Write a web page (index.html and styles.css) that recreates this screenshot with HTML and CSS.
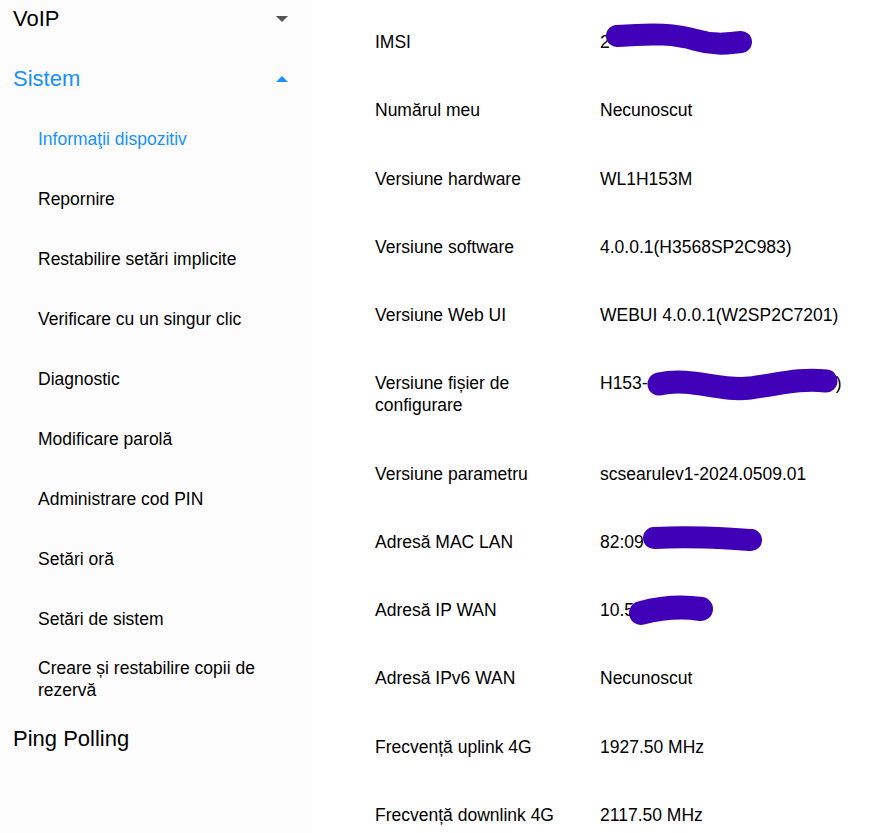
FILE: index.html
```html
<!DOCTYPE html>
<html lang="ro">
<head>
<meta charset="utf-8">
<title>Informaţii dispozitiv</title>
<link rel="stylesheet" href="styles.css">
</head>
<body>
<div class="page">
  <nav class="sidebar">
    <div class="menu">
      <div class="menu-top">
        <span>VoIP</span>
        <span class="caret caret-down"></span>
      </div>
      <div class="menu-top active">
        <span>Sistem</span>
        <span class="caret caret-up"></span>
      </div>
      <div class="menu-sub active">Informaţii dispozitiv</div>
      <div class="menu-sub">Repornire</div>
      <div class="menu-sub">Restabilire setări implicite</div>
      <div class="menu-sub">Verificare cu un singur clic</div>
      <div class="menu-sub">Diagnostic</div>
      <div class="menu-sub">Modificare parolă</div>
      <div class="menu-sub">Administrare cod PIN</div>
      <div class="menu-sub">Setări oră</div>
      <div class="menu-sub">Setări de sistem</div>
      <div class="menu-sub">Creare și restabilire copii de rezervă</div>
      <div class="menu-top">
        <span>Ping Polling</span>
      </div>
    </div>
  </nav>
  <main class="content">
    <div class="info">
      <div class="row"><div class="label">IMSI</div><div class="value">2</div></div>
      <div class="row"><div class="label">Numărul meu</div><div class="value">Necunoscut</div></div>
      <div class="row"><div class="label">Versiune hardware</div><div class="value">WL1H153M</div></div>
      <div class="row"><div class="label">Versiune software</div><div class="value">4.0.0.1(H3568SP2C983)</div></div>
      <div class="row"><div class="label">Versiune Web UI</div><div class="value">WEBUI 4.0.0.1(W2SP2C7201)</div></div>
      <div class="row"><div class="label">Versiune fișier de configurare</div><div class="value">H153-<span class="hidden"></span>)</div></div>
      <div class="row"><div class="label">Versiune parametru</div><div class="value">scsearulev1-2024.0509.01</div></div>
      <div class="row"><div class="label">Adresă MAC LAN</div><div class="value">82:09</div></div>
      <div class="row"><div class="label">Adresă IP WAN</div><div class="value">10.5</div></div>
      <div class="row"><div class="label">Adresă IPv6 WAN</div><div class="value">Necunoscut</div></div>
      <div class="row"><div class="label">Frecvență uplink 4G</div><div class="value">1927.50 MHz</div></div>
      <div class="row"><div class="label">Frecvență downlink 4G</div><div class="value">2117.50 MHz</div></div>
    </div>
  </main>
  <svg class="redact" width="870" height="833" viewBox="0 0 870 833" aria-hidden="true">
    <g fill="none" stroke="#3f00b8" stroke-linecap="round" stroke-linejoin="round">
      <path stroke-width="22" d="M617 36 C655 33 676 34 696 40 C716 46 730 43 741 42"/>
      <path stroke-width="23" d="M659 384 C692 377 720 392 750 388 C780 384 800 378 826 381"/>
      <path stroke-width="22" d="M654 538 C690 536 720 538 751 540"/>
      <path stroke-width="24" d="M641 613 C660 608 680 606 701 609"/>
    </g>
  </svg>
</div>
</body>
</html>
```
FILE: styles.css
```css
html, body {
  margin: 0;
  padding: 0;
  background: #ffffff;
}

body {
  font-family: "Liberation Sans", Arial, sans-serif;
  color: #000;
}

.page {
  position: relative;
  display: flex;
  width: 870px;
  height: 833px;
  overflow: hidden;
}

.sidebar {
  width: 312px;
  flex: 0 0 312px;
  background: #fcfcfc;
  overflow: hidden;
}

.menu {
  display: flex;
  flex-direction: column;
  margin-top: -11px;
}

.menu-top {
  height: 60px;
  display: flex;
  align-items: center;
  justify-content: space-between;
  padding: 0 24px 0 13px;
  font-size: 22px;
  line-height: 26px;
  color: #000;
}

.menu-top.active {
  color: #1890ff;
}

.caret {
  width: 0;
  height: 0;
  border-left: 6px solid transparent;
  border-right: 6px solid transparent;
}

.caret-down {
  border-top: 6px solid #555555;
}

.caret-up {
  border-bottom: 6px solid #1890ff;
}

.menu-sub {
  min-height: 60px;
  display: flex;
  align-items: center;
  padding: 0 40px 0 38px;
  font-size: 17.5px;
  line-height: 22px;
  color: #000;
}

.menu-sub.active {
  color: #1890ff;
}

.content {
  flex: 1;
  background: #ffffff;
  padding: 8px 0 0 63px;
}

.info {
  display: flex;
  flex-direction: column;
}

.row {
  display: grid;
  grid-template-columns: 225px 1fr;
  padding: 23.13px 0;
  font-size: 17.5px;
  line-height: 22px;
}

.label {
  padding-right: 20px;
}

.hidden {
  display: inline-block;
  width: 188px;
}

.redact {
  position: absolute;
  left: 0;
  top: 0;
  pointer-events: none;
}
```
